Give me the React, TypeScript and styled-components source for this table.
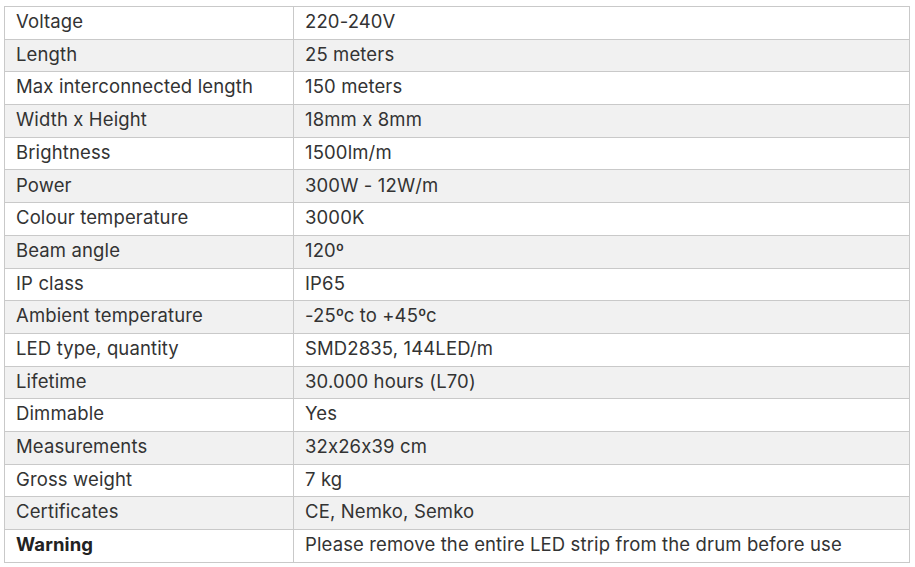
import React from 'react';
import styled, { createGlobalStyle } from 'styled-components';

const GlobalStyle = createGlobalStyle`
    html, body {
        margin: 0;
        padding: 0;
        background: #fff;
    }
    body {
        font-family: 'Inter', 'Lato', sans-serif;
        font-feature-settings: 'calt' 0;
    }
`;

const Wrapper = styled.div`
    padding: 6px 5px 0 4px;
`;

const SpecTable = styled.table`
    width: 906px;
    border-collapse: collapse;
    border: 1px solid #c9c9c9;
    font-size: 18.5px;
    letter-spacing: 0.13px;
    color: #333;
`;

const Row = styled.tr<{ $shaded: boolean }>`
    height: 32.7px;
    background-color: ${(p) => (p.$shaded ? '#f1f1f1' : '#fff')};
`;

const Cell = styled.td<{ $bold?: boolean }>`
    border: 1px solid #c9c9c9;
    padding: 0 11px 3px;
    vertical-align: middle;
    line-height: 1;
    font-weight: ${(p) => (p.$bold ? 700 : 400)};
    color: ${(p) => (p.$bold ? '#222' : '#333')};
    white-space: nowrap;

    &:first-child {
        width: 266px;
    }
`;

const specs: [string, string][] = [
    ['Voltage', '220-240V'],
    ['Length', '25 meters'],
    ['Max interconnected length', '150 meters'],
    ['Width x Height', '18mm x 8mm'],
    ['Brightness', '1500lm/m'],
    ['Power', '300W - 12W/m'],
    ['Colour temperature', '3000K'],
    ['Beam angle', '120º'],
    ['IP class', 'IP65'],
    ['Ambient temperature', '-25ºc to +45ºc'],
    ['LED type, quantity', 'SMD2835, 144LED/m'],
    ['Lifetime', '30.000 hours (L70)'],
    ['Dimmable', 'Yes'],
    ['Measurements', '32x26x39 cm'],
    ['Gross weight', '7 kg'],
    ['Certificates', 'CE, Nemko, Semko'],
];

const App: React.FC = () => {
    return (
        <>
            <GlobalStyle />
            <Wrapper>
                <SpecTable>
                    <tbody>
                        {specs.map(([label, value], i) => (
                            <Row key={label} $shaded={i % 2 === 1}>
                                <Cell>{label}</Cell>
                                <Cell>{value}</Cell>
                            </Row>
                        ))}
                        <Row $shaded={false}>
                            <Cell $bold>Warning</Cell>
                            <Cell>Please remove the entire LED strip from the drum before use</Cell>
                        </Row>
                    </tbody>
                </SpecTable>
            </Wrapper>
        </>
    );
};

export default App;
